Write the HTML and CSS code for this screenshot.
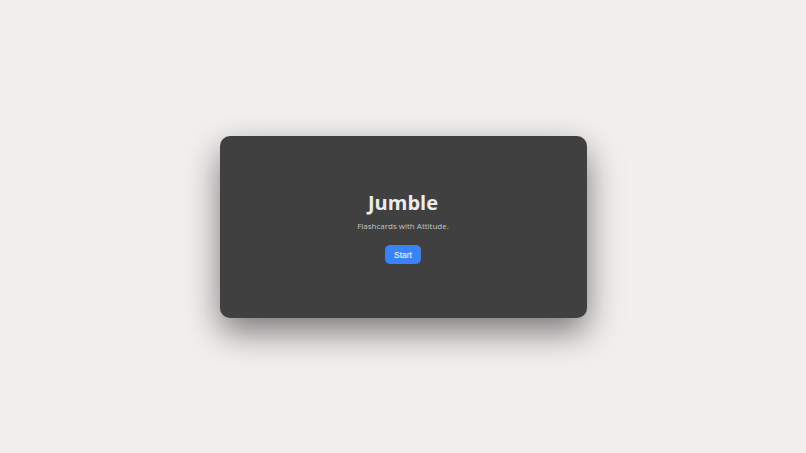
FILE: index.html
```html
<!DOCTYPE html>
<html>
<head>
<meta charset="utf-8">
<link rel="stylesheet" href="styles.css">
</head>
<body>
<main class="stage">
  <section class="card">
    <h1 class="title">Jumble</h1>
    <p class="tagline">Flashcards with Attitude.</p>
    <button class="start">Start</button>
  </section>
</main>
</body>
</html>
```
FILE: styles.css
```css
html, body {
  margin: 0;
  padding: 0;
  height: 100%;
}
body {
  background: #f2f0ef;
  font-family: "Open Sans", "Noto Sans", sans-serif;
}
.stage {
  height: 100%;
  display: flex;
  align-items: center;
  justify-content: center;
}
.card {
  width: 367px;
  height: 182px;
  box-sizing: border-box;
  background: #404040;
  border-radius: 10px;
  box-shadow: 0 14px 34px rgba(0, 0, 0, 0.5);
  display: flex;
  flex-direction: column;
  align-items: center;
  justify-content: center;
  padding-top: 1px;
}
.title {
  margin: 0;
  color: #ececec;
  font-size: 20px;
  font-weight: 700;
  line-height: 26px;
}
.tagline {
  margin: 4px 0 0;
  color: #c4c4c4;
  font-size: 8px;
  line-height: 12px;
}
.start {
  margin-top: 13px;
  width: 36px;
  height: 19px;
  padding: 0;
  border: none;
  border-radius: 5px;
  background: #3b82f6;
  color: #ffffff;
  font-family: "Liberation Sans", Arial, sans-serif;
  font-size: 8.5px;
  font-weight: 500;
}
```
